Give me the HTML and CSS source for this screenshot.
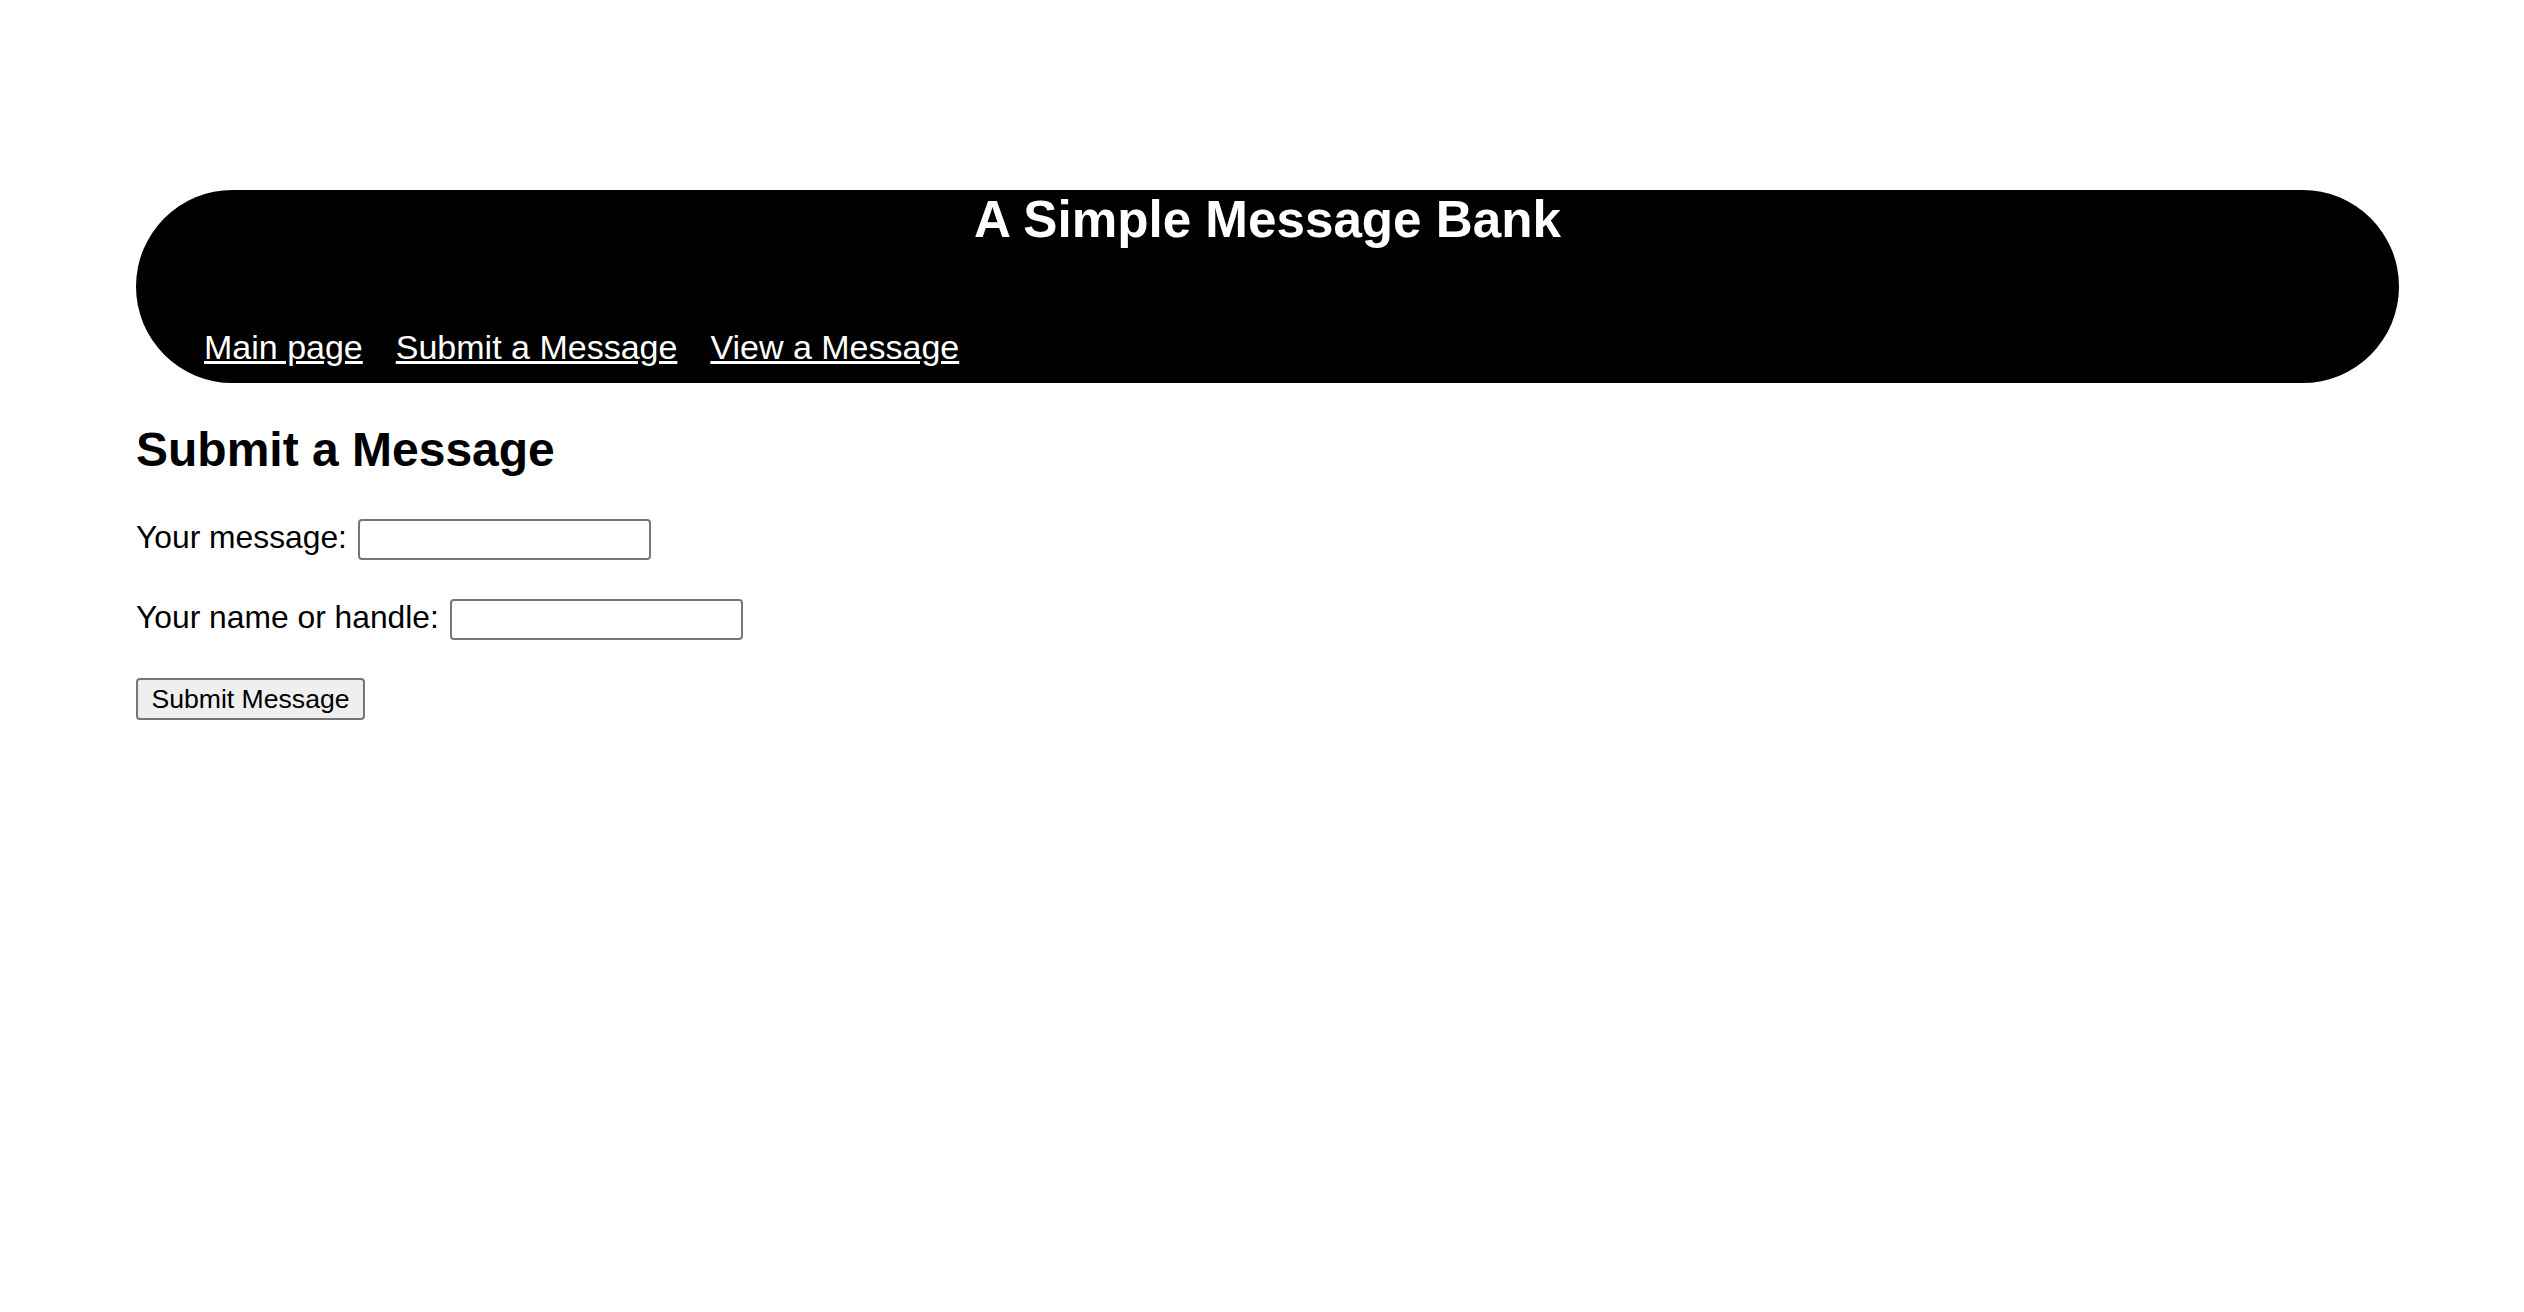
FILE: index.html
```html
<!DOCTYPE html>
<html lang="en">
<head>
<meta charset="utf-8">
<title>A Simple Message Bank</title>
<link rel="stylesheet" href="styles.css">
</head>
<body>
<div class="page">
  <header class="banner">
    <h1 class="title">A Simple Message Bank</h1>
    <nav class="nav">
      <a href="#" class="nav-link">Main page</a>
      <a href="#" class="nav-link">Submit a Message</a>
      <a href="#" class="nav-link">View a Message</a>
    </nav>
  </header>
  <main class="content">
    <h2 class="heading">Submit a Message</h2>
    <form class="form">
      <div class="row">
        <label class="label" for="msg">Your message:</label>
        <input class="field" type="text" id="msg">
      </div>
      <div class="row">
        <label class="label" for="handle">Your name or handle:</label>
        <input class="field" type="text" id="handle">
      </div>
      <div class="row row-submit">
        <button type="button" class="btn">Submit Message</button>
      </div>
    </form>
  </main>
</div>
</body>
</html>
```

FILE: styles.css
```css
html, body {
  margin: 0;
  padding: 0;
  background: #ffffff;
}

body {
  font-family: "Liberation Sans", Arial, Helvetica, sans-serif;
  color: #000000;
}

.page {
  padding: 190px 125px 0 136px;
}

.banner {
  background: #000000;
  color: #ffffff;
  height: 193px;
  border-radius: 97px;
  display: flex;
  flex-direction: column;
  box-sizing: border-box;
  padding-bottom: 16px;
}

.title {
  margin: 0;
  font-size: 51.2px;
  line-height: 59px;
  font-weight: bold;
  text-align: center;
}

.nav {
  margin-top: auto;
  padding-left: 68px;
  display: flex;
  gap: 33px;
  font-size: 34px;
  line-height: 39px;
}

.nav-link {
  color: #ffffff;
  text-decoration: underline;
}

.content {
  display: flex;
  flex-direction: column;
}

.heading {
  margin: 39px 0 0 0;
  font-size: 48px;
  line-height: 55px;
  font-weight: bold;
}

.form {
  margin-top: 39px;
  display: flex;
  flex-direction: column;
  gap: 36px;
}

.row {
  display: flex;
  align-items: flex-start;
  gap: 11px;
}

.label {
  margin-top: 3px;
  font-size: 31.8px;
  line-height: 36px;
}

.field {
  margin: 3px 0 0 0;
  width: 293px;
  height: 41px;
  box-sizing: border-box;
  border: 2px solid #767676;
  border-radius: 4px;
  background: #ffffff;
  padding: 2px 4px;
  font-family: "Liberation Sans", Arial, sans-serif;
  font-size: 21px;
}

.row-submit {
  margin-top: 2px;
}

.btn {
  margin: 0;
  width: 229px;
  height: 42px;
  box-sizing: border-box;
  border: 2px solid #767676;
  border-radius: 4px;
  background: #efefef;
  color: #000000;
  padding: 0;
  font-family: "Liberation Sans", Arial, sans-serif;
  font-size: 26.6px;
  line-height: 38px;
}
```
